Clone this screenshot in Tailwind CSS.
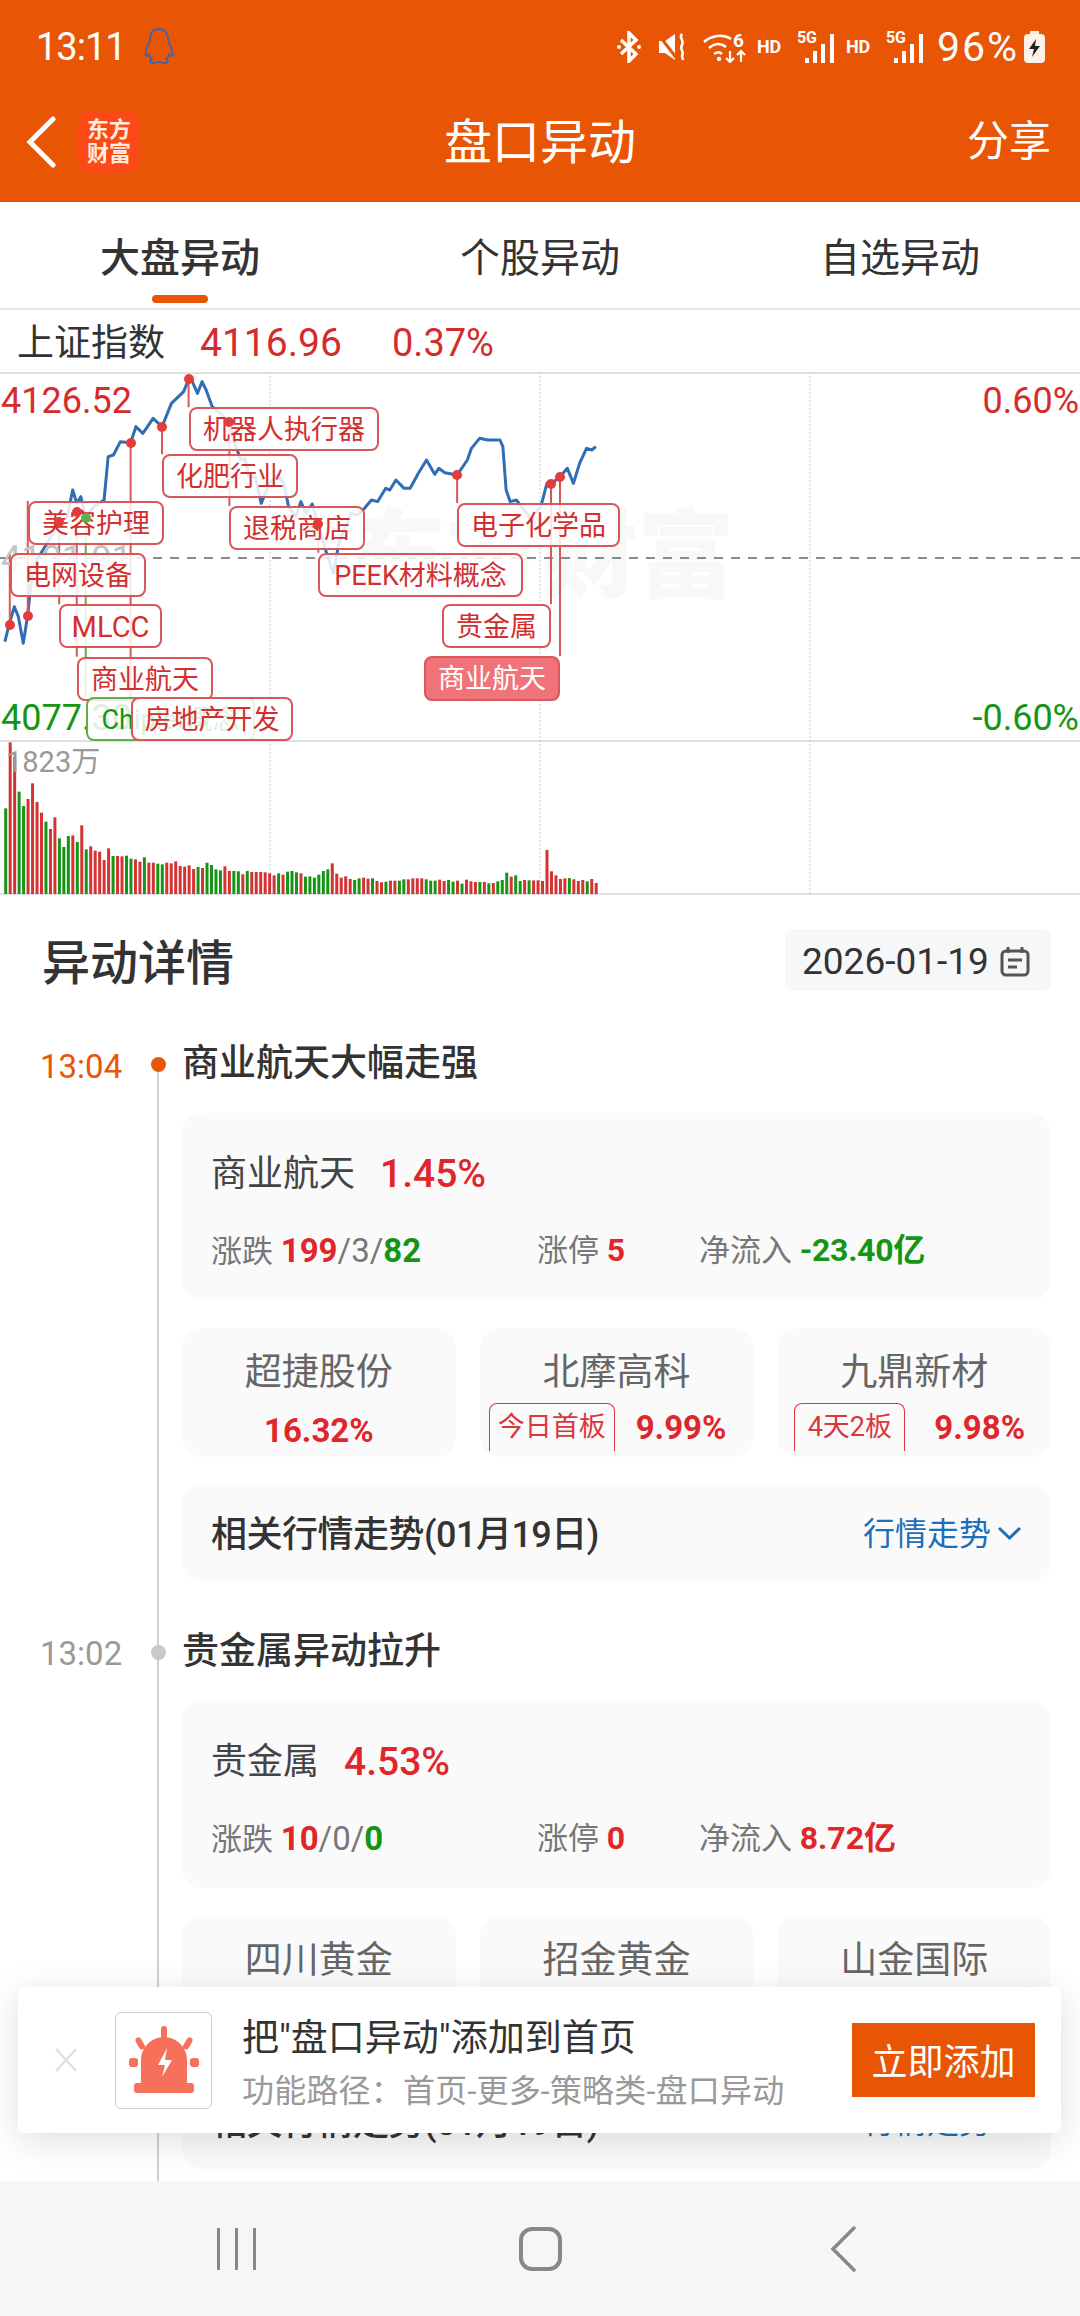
<!DOCTYPE html>
<html lang="zh">
<head>
<meta charset="utf-8">
<script src="https://cdn.jsdelivr.net/npm/@tailwindcss/browser@4"></script>
<title>盘口异动</title>
</head>
<body class="bg-white">
<div class="w-[1080px] h-[2316px] flex flex-col overflow-hidden font-['Roboto','Noto_Sans_CJK_SC',sans-serif] text-[#333]">
  <main class="relative flex-1 overflow-hidden">

    <!-- App header with system status row -->
    <header class="h-[202px] bg-[#e85504] text-white">
      <div class="h-[94px] flex items-center justify-between pl-[36px] pr-[35px]">
        <div class="flex items-center gap-[17px]">
          <span class="text-[38px] leading-none tracking-[-1px]">13:11</span>
          <svg width="32" height="38" viewBox="0 0 32 38" fill="none" stroke="#4164ad" stroke-width="1.8"><path d="M16 1c-6 0-9 4.5-9 10 0 2-.5 3-1.5 5C3.5 20 2 24 2.5 27c.3 1.5 1.5 1.5 3.5-.5.6 2 1.5 3.5 3 4.5-2 1-3 3.500 0 4 3 .5 5-1 7-1s4 1.500 7 1c3-.5 2-3 0-4 1.500-1 2.400-2.500 3-4.500 2 2 3.200 2 3.500.5.500-3-1-7-3-11-1-2-1.500-3-1.500-5 0-5.500-3-10-9-10z"/></svg>
        </div>
        <div class="flex items-center">
          <svg width="26" height="32" viewBox="0 0 26 32" fill="none" stroke="white" stroke-width="3.5"><path d="M5 9l15 14-7 7V2l7 7L5 23"/><circle cx="3" cy="16" r="2" fill="white" stroke="none"/><circle cx="23" cy="16" r="2" fill="white" stroke="none"/></svg>
          <svg class="ml-[16px]" width="30" height="30" viewBox="0 0 30 30"><path d="M1 9h6l10-7v26l-10-7H1z" fill="white"/><path d="M0 2l20 26" stroke="#e85504" stroke-width="3"/><path d="M24 2c-4 4 3 6 0 11s3 6 0 11l1 4" fill="none" stroke="white" stroke-width="2.500"/></svg>
          <svg class="ml-[15px]" width="44" height="32" viewBox="0 0 44 32" fill="none" stroke="white" stroke-width="2.500"><path d="M1 11c8-7 19-8 27-3M6 17c5-5 12-5 17-1M11 23c3-2 6-2 8 0"/><circle cx="16" cy="28" r="2.200" fill="white" stroke="none"/><path d="M27 20v11M23 27l4 4 4-4M38 31V20M34 24l4-4 4 4" stroke-width="2.200"/></svg>
          <span class="ml-[-14px] mt-[-14px] w-[14px] text-[19px] font-bold leading-none">6</span>
          <span class="ml-[10px] w-[26px] text-[18px] font-bold leading-none">HD</span>
          <div class="relative ml-[14px] w-[38px] h-[32px]">
            <span class="absolute left-0 top-[-1px] text-[16px] font-bold leading-none">5G</span>
            <svg class="absolute left-[8px] top-[3px]" width="30" height="29" viewBox="0 0 30 29" fill="white"><rect x="0" y="24" width="4" height="5"/><rect x="8" y="17" width="4" height="12"/><rect x="16" y="10" width="4" height="19"/><rect x="25" y="0" width="4" height="29"/></svg>
          </div>
          <span class="ml-[11px] w-[26px] text-[18px] font-bold leading-none">HD</span>
          <div class="relative ml-[14px] w-[38px] h-[32px]">
            <span class="absolute left-0 top-[-1px] text-[16px] font-bold leading-none">5G</span>
            <svg class="absolute left-[8px] top-[3px]" width="30" height="29" viewBox="0 0 30 29" fill="white"><rect x="0" y="24" width="4" height="5"/><rect x="8" y="17" width="4" height="12"/><rect x="16" y="10" width="4" height="19"/><rect x="25" y="0" width="4" height="29"/></svg>
          </div>
          <span class="ml-[13px] text-[41px] leading-none tracking-[2px]">96%</span>
          <svg class="ml-[5px]" width="21" height="32" viewBox="0 0 21 32"><rect x="6" y="0" width="9" height="4" fill="#ffeedd"/><rect x="0" y="3" width="21" height="29" rx="4" fill="#fff1e6"/><path d="M12 8l-7 10h5l-2 8 8-11h-5z" fill="#222"/></svg>
        </div>
      </div>
      <nav class="grid grid-cols-3 items-center h-[96px]">
        <div class="flex items-center pl-[25px]">
          <svg width="32" height="52" viewBox="0 0 32 52" fill="none" stroke="white" stroke-width="5" stroke-linecap="round"><path d="M28 3L5 26l23 23"/></svg>
          <div class="ml-[21px] w-[62px] h-[62px] rounded-[12px] bg-[#fb4a17] text-[#ffeedd] text-[22px] leading-[24px] font-bold text-center flex flex-col justify-center"><span>东方</span><span>财富</span></div>
        </div>
        <div class="text-center text-[48px] leading-none pt-[2px]">盘口异动</div>
        <div class="text-right pr-[29px] text-[42px] leading-none">分享</div>
      </nav>
    </header>

    <!-- Section tabs -->
    <div class="grid grid-cols-3 h-[108px] border-b-2 border-[#e8e8e8] text-center text-[40px] leading-[48px]">
      <div class="flex flex-col items-center pt-[33px] font-medium">大盘异动<span class="block mt-[12px] w-[56px] h-[8px] rounded-full bg-[#e85504]"></span></div>
      <div class="pt-[33px]">个股异动</div>
      <div class="pt-[33px]">自选异动</div>
    </div>

    <!-- Index quote -->
    <div class="flex items-center h-[62px] pl-[17px] pt-[4px] text-[37px] leading-none">
      <span class="w-[183px]">上证指数</span>
      <span class="w-[192px] text-[39px] text-[#d62b2b]">4116.96</span>
      <span class="text-[38px] text-[#d62b2b]">0.37%</span>
    </div>

    <!-- Intraday chart with event tags -->
    <div class="relative h-[524px] overflow-hidden">
      <div class="absolute left-[350px] top-[136px] text-[96px] leading-none font-black text-[#f8f8f8]">东方财富</div>
      <svg class="absolute inset-0" width="1080" height="524" viewBox="0 372 1080 524" fill="none">
        <path d="M0 373H1080M0 741H1080M0 894H1080" stroke="#e0e0e0" stroke-width="2"/>
        <path d="M270 372V894M540 372V894M810 372V894" stroke="#ccc" stroke-width="1" stroke-dasharray="2 2"/>
        <path d="M0 558H1080" stroke="#8a8a8a" stroke-width="2" stroke-dasharray="9 8"/>
        <g id="volume"></g>
        <g transform="translate(0 360) scale(0.40816 0.33333)">
          <polyline vector-effect="non-scaling-stroke" stroke="#2f6db5" stroke-width="3" stroke-linejoin="round" points="12,845 22,795 35,740 45,770 57,850 68,765 75,680 90,600 110,560 130,520 145,490 165,470 178,390 188,430 198,410 210,470 230,440 255,420 265,290 278,285 295,245 320,248 333,200 350,220 375,175 397,200 420,130 450,95 462,58 470,62 484,100 495,65 505,90 520,140 535,155 562,185 575,250 590,300 600,295 610,350 625,350 640,430 660,370 680,345 695,370 707,440 725,470 737,425 750,460 765,432 780,492 795,560 817,640 830,550 860,460 875,465 893,445 910,420 925,425 945,385 955,390 970,360 990,385 1005,385 1025,340 1045,300 1065,343 1075,325 1090,338 1120,345 1145,300 1155,265 1175,235 1195,240 1225,240 1232,260 1240,390 1250,425 1265,420 1300,475 1325,440 1340,370 1350,372 1372,350 1390,325 1405,370 1420,310 1437,265 1450,270 1460,260"/>
          <path vector-effect="non-scaling-stroke" stroke="#d9575a" stroke-width="2" d="M24 795V578M68 767V423M145 487V733M188 455V890M320 248V1011M397 200V283M462 58V142M562 185V438M780 492V578M1120 345V429M1350 372V733M1372 350V888"/>
          <path vector-effect="non-scaling-stroke" d="M210 474V1011" stroke="#5fae4a" stroke-width="2"/>
        </g>
      </svg>

      <span class="absolute left-[1px] top-[11px] text-[36px] leading-[36px] text-[#d62b2b]">4126.52</span>
      <span class="absolute left-[1px] top-[169px] text-[36px] leading-[36px] text-[#c4c4c4]">4101.91</span>
      <span class="absolute left-[1px] top-[328px] text-[36px] leading-[36px] text-[#149614]">4077.30</span>
      <span class="absolute right-[1px] top-[11px] text-[36px] leading-[36px] text-[#d62b2b]">0.60%</span>
      <span class="absolute right-[1px] top-[328px] text-[36px] leading-[36px] text-[#149614]">-0.60%</span>
      <span class="absolute left-[6px] top-[374px] text-[29px] leading-[32px] text-[#999]">1823万</span>

      <div class="absolute left-[189px] top-[35px] w-[190px] h-[44px] pt-[2px] flex items-center justify-center rounded-[8px] border-2 border-[#d9575a] bg-white/85 text-[27px] leading-none text-[#d32f2f]">机器人执行器</div>
      <div class="absolute left-[162px] top-[82px] w-[136px] h-[44px] pt-[2px] flex items-center justify-center rounded-[8px] border-2 border-[#d9575a] bg-white/85 text-[27px] leading-none text-[#d32f2f]">化肥行业</div>
      <div class="absolute left-[28px] top-[129px] w-[136px] h-[44px] pt-[2px] flex items-center justify-center rounded-[8px] border-2 border-[#d9575a] bg-white/85 text-[27px] leading-none text-[#d32f2f]">美容护理</div>
      <div class="absolute left-[229px] top-[134px] w-[136px] h-[44px] pt-[2px] flex items-center justify-center rounded-[8px] border-2 border-[#d9575a] bg-white/85 text-[27px] leading-none text-[#d32f2f]">退税商店</div>
      <div class="absolute left-[457px] top-[131px] w-[163px] h-[44px] pt-[2px] flex items-center justify-center rounded-[8px] border-2 border-[#d9575a] bg-white/85 text-[27px] leading-none text-[#d32f2f]">电子化学品</div>
      <div class="absolute left-[10px] top-[181px] w-[136px] h-[44px] pt-[2px] flex items-center justify-center rounded-[8px] border-2 border-[#d9575a] bg-white/85 text-[27px] leading-none text-[#d32f2f]">电网设备</div>
      <div class="absolute left-[318px] top-[181px] w-[205px] h-[44px] pt-[2px] flex items-center justify-center rounded-[8px] border-2 border-[#d9575a] bg-white/85 text-[27px] leading-none text-[#d32f2f]">PEEK材料概念</div>
      <div class="absolute left-[59px] top-[232px] w-[103px] h-[44px] pt-[2px] flex items-center justify-center rounded-[8px] border-2 border-[#d9575a] bg-white/85 text-[29px] leading-none text-[#d32f2f]">MLCC</div>
      <div class="absolute left-[442px] top-[232px] w-[109px] h-[44px] pt-[2px] flex items-center justify-center rounded-[8px] border-2 border-[#d9575a] bg-white/85 text-[27px] leading-none text-[#d32f2f]">贵金属</div>
      <div class="absolute left-[77px] top-[285px] w-[136px] h-[44px] pt-[2px] flex items-center justify-center rounded-[8px] border-2 border-[#d9575a] bg-white/85 text-[27px] leading-none text-[#d32f2f]">商业航天</div>
      <div class="absolute left-[424px] top-[284px] w-[136px] h-[45px] pt-[2px] flex items-center justify-center rounded-[8px] border-2 border-[#d9575a] bg-[#ef7378] text-[27px] leading-none text-white">商业航天</div>
      <div class="absolute left-[86px] top-[325px] w-[169px] h-[44px] pt-[2px] flex items-center justify-center rounded-[8px] border-2 border-[#5fae4a] bg-white/85 text-[27px] leading-none text-[#149614]">Chiplet概念</div>
      <div class="absolute left-[131px] top-[325px] w-[162px] h-[44px] pt-[2px] flex items-center justify-center rounded-[8px] border-2 border-[#d9575a] bg-white/85 text-[27px] leading-none text-[#d32f2f]">房地产开发</div>

      <svg class="absolute inset-0" width="1080" height="524" viewBox="0 372 1080 524">
        <g fill="#e23c3c">
          <circle cx="10" cy="625" r="5"/><circle cx="28" cy="616" r="5"/><circle cx="59" cy="522" r="5"/><circle cx="77" cy="512" r="5"/>
          <circle cx="131" cy="443" r="5"/><circle cx="162" cy="427" r="5"/><circle cx="189" cy="379" r="5"/><circle cx="229" cy="422" r="5"/>
          <circle cx="318" cy="524" r="5"/><circle cx="457" cy="475" r="5"/><circle cx="551" cy="484" r="5"/><circle cx="560" cy="477" r="5"/>
        </g>
        <circle cx="86" cy="518" r="5" fill="#5fae4a"/>
      </svg>
    </div>

    <!-- Detail heading and date picker -->
    <div class="flex items-center justify-between h-[62px] mt-[33px] pl-[42px] pr-[29px]">
      <h2 class="pt-[8px] text-[48px] leading-none font-medium">异动详情</h2>
      <div class="flex items-center h-[62px] w-[266px] pl-[17px] pt-[2px] gap-[11px] rounded-[8px] bg-[#f6f7f8] text-[37px] leading-none">
        <span>2026-01-19</span>
        <svg width="30" height="31" viewBox="0 0 30 31" fill="none" stroke="#555" stroke-width="3"><rect x="2" y="5" width="26" height="24" rx="4"/><path d="M8 1v6M22 1v6M8 14h14M8 21h9"/></svg>
      </div>
    </div>

    <!-- Timeline: first entry -->
    <section class="flex mt-[47px] pr-[29px]">
      <div class="w-[150px] pl-[40px] pt-[9px] text-[33px] leading-[40px] text-[#e85504]">13:04</div>
      <div class="flex flex-col items-center w-[16px] pt-[19px]">
        <span class="block w-[15px] h-[15px] shrink-0 rounded-full bg-[#e85504]"></span>
        <span class="block w-[2px] flex-1 bg-[#cfcfcf]"></span>
      </div>
      <div class="flex-1 ml-[16px] pb-[45px]">
        <h3 class="h-[48px] text-[37px] leading-[51px] font-medium">商业航天大幅走强</h3>
        <div class="h-[187px] mt-[27px] pl-[29px] pt-[36px] rounded-[20px] bg-[#fafafa]">
          <div class="flex items-center gap-[25px] h-[48px] pt-[2px] text-[36px] leading-none">
            <span class="text-[#444]">商业航天</span><span class="text-[39px] font-medium text-[#e0262b]">1.45%</span>
          </div>
          <div class="flex items-center h-[40px] mt-[33px] text-[31px] leading-none text-[#777]">
            <span class="w-[326px]">涨跌 <span class="text-[33px]"><b class="font-bold text-[#e0262b]">199</b>/3/<b class="font-bold text-[#149614]">82</b></span></span>
            <span class="w-[162px]">涨停 <b class="text-[32px] font-bold text-[#e0262b]">5</b></span>
            <span>净流入 <b class="text-[32px] tracking-[-0.3px] font-bold text-[#149614]">-23.40亿</b></span>
          </div>
        </div>
        <div class="grid grid-cols-3 gap-[24px] mt-[28px]">
          <div class="h-[129px] overflow-hidden rounded-[20px] bg-[#fafafa] pt-[19px] text-center">
            <div class="h-[48px] text-[37px] leading-[51px] text-[#666]">超捷股份</div>
            <div class="mt-[16px] text-[33px] leading-[40px] font-bold text-[#e0262b]">16.32%</div>
          </div>
          <div class="h-[129px] overflow-hidden rounded-[20px] bg-[#fafafa] pt-[19px]">
            <div class="h-[48px] text-center text-[37px] leading-[51px] text-[#666]">北摩高科</div>
            <div class="flex items-center mt-[8px] pl-[9px] gap-[21px]">
              <span class="flex items-center justify-center w-[126px] h-[48px] rounded-t-[8px] border border-b-0 border-[#d9373c] text-[27px] leading-none text-[#d9373c]">今日首板</span>
              <span class="text-[33px] leading-none font-bold text-[#e0262b]">9.99%</span>
            </div>
          </div>
          <div class="h-[129px] overflow-hidden rounded-[20px] bg-[#fafafa] pt-[19px]">
            <div class="h-[48px] text-center text-[37px] leading-[51px] text-[#666]">九鼎新材</div>
            <div class="flex items-center mt-[8px] pl-[17px] gap-[29px]">
              <span class="flex items-center justify-center w-[111px] h-[48px] rounded-t-[8px] border border-b-0 border-[#d9373c] text-[27px] leading-none text-[#d9373c]">4天2板</span>
              <span class="text-[33px] leading-none font-bold text-[#e0262b]">9.98%</span>
            </div>
          </div>
        </div>
        <div class="flex items-center justify-between h-[96px] mt-[28px] pl-[29px] pr-[29px] rounded-[20px] bg-[#fafafa]">
          <span class="pt-[3px] text-[36px] leading-none tracking-[-0.5px] font-medium">相关行情走势(01月19日)</span>
          <span class="flex items-center gap-[6px] text-[32px] leading-none text-[#1c6fb8]"><span class="pt-[2px]">行情走势</span><svg width="25" height="14" viewBox="0 0 25 14" fill="none" stroke="#1c6fb8" stroke-width="3"><path d="M2 2l10.500 10L23 2"/></svg></span>
        </div>
      </div>
    </section>

    <!-- Timeline: second entry -->
    <section class="flex pr-[29px]">
      <div class="w-[150px] pl-[40px] pt-[8px] text-[33px] leading-[40px] text-[#999]">13:02</div>
      <div class="flex flex-col items-center w-[16px]">
        <span class="block w-[2px] h-[19px] bg-[#cfcfcf]"></span>
        <span class="block w-[15px] h-[15px] shrink-0 rounded-full bg-[#c8c8c8]"></span>
        <span class="block w-[2px] flex-1 bg-[#cfcfcf]"></span>
      </div>
      <div class="flex-1 ml-[16px] pb-[45px]">
        <h3 class="h-[48px] text-[37px] leading-[51px] font-medium">贵金属异动拉升</h3>
        <div class="h-[187px] mt-[27px] pl-[29px] pt-[36px] rounded-[20px] bg-[#fafafa]">
          <div class="flex items-center gap-[25px] h-[48px] pt-[2px] text-[36px] leading-none">
            <span class="text-[#444]">贵金属</span><span class="text-[39px] font-medium text-[#e0262b]">4.53%</span>
          </div>
          <div class="flex items-center h-[40px] mt-[33px] text-[31px] leading-none text-[#777]">
            <span class="w-[326px]">涨跌 <span class="text-[33px]"><b class="font-bold text-[#e0262b]">10</b>/0/<b class="font-bold text-[#149614]">0</b></span></span>
            <span class="w-[162px]">涨停 <b class="text-[32px] font-bold text-[#e0262b]">0</b></span>
            <span>净流入 <b class="text-[32px] font-bold text-[#e0262b]">8.72亿</b></span>
          </div>
        </div>
        <div class="grid grid-cols-3 gap-[24px] mt-[28px]">
          <div class="h-[129px] rounded-[20px] bg-[#fafafa] pt-[19px] text-center text-[37px] leading-[51px] text-[#666]">四川黄金</div>
          <div class="h-[129px] rounded-[20px] bg-[#fafafa] pt-[19px] text-center text-[37px] leading-[51px] text-[#666]">招金黄金</div>
          <div class="h-[129px] rounded-[20px] bg-[#fafafa] pt-[19px] text-center text-[37px] leading-[51px] text-[#666]">山金国际</div>
        </div>
        <div class="flex items-center justify-between h-[96px] mt-[28px] pl-[29px] pr-[29px] rounded-[20px] bg-[#fafafa]">
          <span class="pt-[3px] text-[36px] leading-none tracking-[-0.5px] font-medium">相关行情走势(01月19日)</span>
          <span class="flex items-center gap-[6px] text-[32px] leading-none text-[#1c6fb8]"><span class="pt-[2px]">行情走势</span><svg width="25" height="14" viewBox="0 0 25 14" fill="none" stroke="#1c6fb8" stroke-width="3"><path d="M2 2l10.500 10L23 2"/></svg></span>
        </div>
      </div>
    </section>

    <!-- Add-to-home prompt floating over the list -->
    <aside class="absolute left-[18px] top-[1987px] w-[1043px] h-[146px] flex items-center rounded-[6px] bg-white shadow-[0_8px_36px_rgba(0,0,0,0.13)]">
      <svg class="ml-[37px] shrink-0" width="22" height="24" viewBox="0 0 22 24" fill="none" stroke="#dfe1e3" stroke-width="2.500"><path d="M1 1l20 22M21 1L1 23"/></svg>
      <div class="ml-[38px] shrink-0 flex items-center justify-center w-[97px] h-[97px] rounded-[6px] border border-[#ccc]">
        <svg width="70" height="68" viewBox="0 0 70 68" fill="#f7705a"><path d="M12 58V34a23 23 0 0 1 46 0v24z"/><rect x="5" y="57" width="60" height="10" rx="3"/><rect x="32" y="0" width="6" height="13" rx="3"/><rect x="8" y="11" width="6" height="13" rx="3" transform="rotate(-30 11 17)"/><rect x="56" y="11" width="6" height="13" rx="3" transform="rotate(30 59 17)"/><rect x="0" y="32" width="9" height="9" rx="3"/><rect x="61" y="32" width="9" height="9" rx="3"/><path d="M38 22l-9 17h7l-3 12 10-17h-7z" fill="white"/></svg>
      </div>
      <div class="ml-[30px] mt-[8px] w-[610px]">
        <div class="text-[37px] leading-[44px]">把"盘口异动"添加到首页</div>
        <div class="mt-[10px] text-[32px] tracking-[0.2px] leading-[40px] text-[#999]">功能路径：首页-更多-策略类-盘口异动</div>
      </div>
      <button class="flex items-center justify-center w-[183px] h-[74px] pt-[6px] bg-[#e85504] text-[36px] leading-none text-white">立即添加</button>
    </aside>
  </main>

  <!-- System navigation bar -->
  <footer class="relative h-[135px] shrink-0 grid grid-cols-3 items-center bg-[#f5f6f8]">
    <div class="flex justify-start gap-[15px] pl-[217px]">
      <span class="w-[3px] h-[42px] bg-[#888]"></span><span class="w-[3px] h-[42px] bg-[#888]"></span><span class="w-[3px] h-[42px] bg-[#888]"></span>
    </div>
    <div class="flex justify-center">
      <span class="w-[43px] h-[44px] rounded-[13px] border-[4px] border-[#888]"></span>
    </div>
    <div class="flex justify-start pl-[110px]">
      <svg width="26" height="46" viewBox="0 0 26 46" fill="none" stroke="#888" stroke-width="3.500" stroke-linecap="round"><path d="M24 2L3 23l21 21"/></svg>
    </div>
  </footer>
</div>

<script>
  // Per-minute volume: [bar top in chart units, direction]
  const tops = [565,367,410,515,558,537,490,546,578,605,627,592,655,681,648,646,666,616,688,679,692,695,720,685,708,708,709,707,716,718,725,712,728,728,731,733,728,730,724,738,740,736,747,741,744,728,735,748,751,739,753,753,754,763,753,756,756,756,757,760,766,760,764,755,753,757,760,770,769,773,764,753,748,730,761,773,769,777,780,775,773,776,775,783,787,785,782,782,782,778,778,775,775,775,778,782,782,779,783,780,785,782,791,779,784,786,786,786,790,789,784,780,758,770,766,783,780,781,781,781,783,690,754,766,777,775,774,778,783,780,784,777,789];
  const dirs = "grrggrrrrgrrgggrgrgrrrrrgrrggrrgrrggrrrrrrrgrggggrrggrgrrrrrrgrgggrggggggrrrrrggrrgrrgrrggrrrrgggrrggrgrrrgrgrgggrggrgrrrrrrrrgrrrgr";
  const svgNS = "http://www.w3.org/2000/svg";
  const group = document.getElementById("volume");
  tops.forEach((top, i) => {
    const r = document.createElementNS(svgNS, "rect");
    const y = 620 + top / 3;
    r.setAttribute("x", (14 + i * 10.96) / 2.45 - 1.5);
    r.setAttribute("y", y);
    r.setAttribute("width", 3);
    r.setAttribute("height", 894 - y);
    r.setAttribute("fill", dirs[i] === "g" ? "#149614" : "#d53333");
    group.appendChild(r);
  });
</script>
</body>
</html>
